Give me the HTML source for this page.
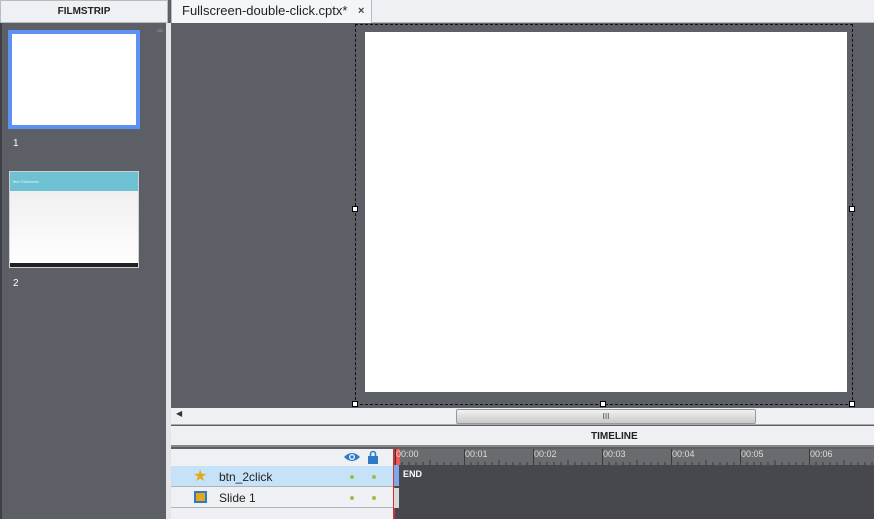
<!DOCTYPE html>
<html><head><style>
*{margin:0;padding:0;box-sizing:border-box}
body{width:874px;height:519px;overflow:hidden;background:#5c5f66;font-family:"Liberation Sans",sans-serif;position:relative}
.a{position:absolute}
</style></head><body>
<div class="a" style="left:0;top:0;width:168px;height:519px;background:#5c5f66;border-right:1px solid #c8c9cc"></div>
<div class="a" style="left:0;top:0;width:168px;height:23px;background:#eff0f4;border:1px solid #b9bbc0;font-size:10px;font-weight:bold;color:#222;text-align:center;line-height:21px">FILMSTRIP</div>
<div class="a" style="left:0;top:23px;width:2px;height:496px;background:#3e4046"></div>
<div class="a" style="left:166px;top:23px;width:5px;height:496px;background:#e4e5e8"></div>
<div class="a" style="left:156px;top:28px;width:0;height:0;border-left:4px solid transparent;border-right:4px solid transparent;border-bottom:4px solid #777"></div>
<div class="a" style="left:8px;top:30px;width:132px;height:99px;border:4px solid #5b92f4;background:#fff"></div>
<div class="a" style="left:13px;top:138px;color:#fff;font-size:10px">1</div>
<div class="a" style="left:9px;top:171px;width:130px;height:97px;border:1px solid #d0d0d0;background:linear-gradient(#ececec,#fff)"></div>
<div class="a" style="left:10px;top:172px;width:128px;height:19px;background:#6dc1d3;color:#e8f6fa;font-size:4px;padding:7px 2px">Test Fullscreen</div>
<div class="a" style="left:10px;top:263px;width:128px;height:4px;background:#222"></div>
<div class="a" style="left:13px;top:278px;color:#fff;font-size:10px">2</div>
<div class="a" style="left:171px;top:0;width:703px;height:23px;background:#eff0f4;border-bottom:1px solid #b9bbc0"></div>
<div class="a" style="left:171px;top:0;width:201px;height:23px;background:#f4f5f8;border-right:1px solid #b9bbc0;border-left:1px solid #b9bbc0;font-size:13px;color:#222;line-height:22px;padding-left:10px">Fullscreen-double-click.cptx*<span style="position:absolute;left:186px;font-size:11px;font-weight:bold;color:#444">×</span></div>
<div class="a" style="left:365px;top:32px;width:482px;height:360px;background:#fff"></div>
<div class="a" style="left:355px;top:24px;width:498px;height:381px;border:1px dashed #111"></div>
<div class="a" style="left:352px;top:206px;width:6px;height:6px;background:#fff;border:1px solid #000"></div>
<div class="a" style="left:849px;top:206px;width:6px;height:6px;background:#fff;border:1px solid #000"></div>
<div class="a" style="left:352px;top:401px;width:6px;height:6px;background:#fff;border:1px solid #000"></div>
<div class="a" style="left:600px;top:401px;width:6px;height:6px;background:#fff;border:1px solid #000"></div>
<div class="a" style="left:849px;top:401px;width:6px;height:6px;background:#fff;border:1px solid #000"></div>
<div class="a" style="left:171px;top:408px;width:703px;height:17px;background:#eff0f4;border-bottom:1px solid #aaa"></div>
<div class="a" style="left:176px;top:409px;font-size:8px;color:#333">◀</div>
<div class="a" style="left:456px;top:409px;width:300px;height:15px;border:1px solid #999;border-radius:2px;background:linear-gradient(#f2f2f2,#c8c8c8);font-size:8px;text-align:center;line-height:13px;color:#444">III</div>
<div class="a" style="left:171px;top:426px;width:703px;height:21px;background:#eff0f4;border-bottom:2px solid #888;font-size:10px;font-weight:bold;color:#222;line-height:21px;padding-left:420px">TIMELINE</div>
<div class="a" style="left:171px;top:449px;width:222px;height:70px;background:#eff0f4"></div>
<svg class="a" style="left:344px;top:450px" width="40" height="14"><path d="M0 7Q8 -1 16 7Q8 15 0 7Z" fill="#2d7bc6"/><circle cx="8" cy="7" r="3" fill="#eff0f4"/><circle cx="8" cy="7" r="1.6" fill="#2d7bc6"/><rect x="24" y="6" width="10" height="8" fill="#2d7bc6"/><path d="M26.5 6V4a2.5 2.5 0 015 0V6" stroke="#2d7bc6" stroke-width="1.6" fill="none"/></svg>
<div class="a" style="left:171px;top:466px;width:222px;height:21px;background:#c6e2f8;border-bottom:1px solid #b0b3b8"></div>
<div class="a" style="left:193px;top:466px;color:#e6a819;font-size:16px">★</div>
<div class="a" style="left:219px;top:470px;font-size:12px;color:#222">btn_2click</div>
<div class="a" style="left:171px;top:487px;width:222px;height:21px;border-bottom:1px solid #b0b3b8"></div>
<div class="a" style="left:194px;top:491px;width:13px;height:12px;background:#e6a819;border:2px solid #2d7bc6"></div>
<div class="a" style="left:219px;top:491px;font-size:12px;color:#222">Slide 1</div>
<div class="a" style="left:350px;top:475px;width:4px;height:4px;border-radius:50%;background:#a8b84a"></div>
<div class="a" style="left:372px;top:475px;width:4px;height:4px;border-radius:50%;background:#a8b84a"></div>
<div class="a" style="left:350px;top:496px;width:4px;height:4px;border-radius:50%;background:#a8b84a"></div>
<div class="a" style="left:372px;top:496px;width:4px;height:4px;border-radius:50%;background:#a8b84a"></div>
<div class="a" style="left:393px;top:449px;width:481px;height:70px;background:#47484d"></div>
<div class="a" style="left:393px;top:449px;width:481px;height:16px;background:#6a6b6e"></div>
<div class="a" style="left:393px;top:449px;width:7px;height:16px;background:#f25757"></div>
<div class="a" style="left:393px;top:449px;width:2px;height:70px;background:#c33"></div>
<div class="a" style="left:394px;top:465px;width:5px;height:21px;background:#7ea7e6"></div>
<div class="a" style="left:394px;top:488px;width:5px;height:20px;background:#d8d8d8"></div>
<div class="a" style="left:403px;top:469px;font-size:9px;font-weight:bold;color:#fff">END</div>
<svg class="a" style="left:393px;top:449px" width="481" height="16">
<g stroke="#3a3a3a" stroke-width="1">
<line x1="2.5" y1="0" x2="2.5" y2="16"/><line x1="71.5" y1="0" x2="71.5" y2="16"/><line x1="140.5" y1="0" x2="140.5" y2="16"/><line x1="209.5" y1="0" x2="209.5" y2="16"/><line x1="278.5" y1="0" x2="278.5" y2="16"/><line x1="347.5" y1="0" x2="347.5" y2="16"/><line x1="416.5" y1="0" x2="416.5" y2="16"/>
</g>
<g fill="#ddd" font-size="9" font-family="Liberation Sans"><text x="3" y="8">00:00</text><text x="72" y="8">00:01</text><text x="141" y="8">00:02</text><text x="210" y="8">00:03</text><text x="279" y="8">00:04</text><text x="348" y="8">00:05</text><text x="417" y="8">00:06</text></g>
<g stroke="#3a3a3a">
<path d="M9 13V16M16 13V16M23 13V16M30 13V16M37 11V16M44 13V16M51 13V16M58 13V16M65 13V16"/>
<path transform="translate(69 0)" d="M9 13V16M16 13V16M23 13V16M30 13V16M37 11V16M44 13V16M51 13V16M58 13V16M65 13V16"/>
<path transform="translate(138 0)" d="M9 13V16M16 13V16M23 13V16M30 13V16M37 11V16M44 13V16M51 13V16M58 13V16M65 13V16"/>
<path transform="translate(207 0)" d="M9 13V16M16 13V16M23 13V16M30 13V16M37 11V16M44 13V16M51 13V16M58 13V16M65 13V16"/>
<path transform="translate(276 0)" d="M9 13V16M16 13V16M23 13V16M30 13V16M37 11V16M44 13V16M51 13V16M58 13V16M65 13V16"/>
<path transform="translate(345 0)" d="M9 13V16M16 13V16M23 13V16M30 13V16M37 11V16M44 13V16M51 13V16M58 13V16M65 13V16"/>
<path transform="translate(414 0)" d="M9 13V16M16 13V16M23 13V16M30 13V16M37 11V16M44 13V16M51 13V16M58 13V16M65 13V16"/>
</g></svg>
</body></html>
